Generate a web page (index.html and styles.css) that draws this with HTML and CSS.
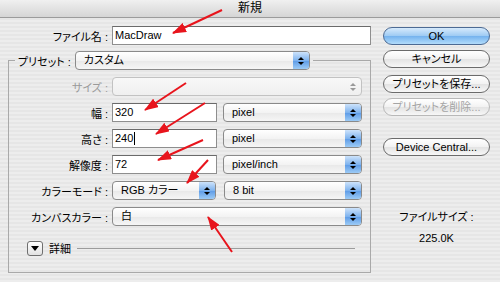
FILE: index.html
```html
<!DOCTYPE html>
<html lang="ja">
<head>
    <meta charset="UTF-8">
    <title>新規</title>
    <link rel="stylesheet" href="styles.css">
</head>
<body>
    <div class="titlebar">新規</div>
    <div class="dialog">
        <div class="main">
            <div class="row name-row">
                <span class="label">ファイル名 :</span>
                <div class="field grow">MacDraw</div>
            </div>
            <fieldset class="group">
                <legend class="preset">
                    <span class="preset-label">プリセット :</span>
                    <div class="popup preset-popup"><span class="value">カスタム</span><span class="arrows"></span></div>
                </legend>
                <div class="row">
                    <span class="label disabled">サイズ :</span>
                    <div class="popup grow off"><span class="value"></span><span class="arrows"></span></div>
                </div>
                <div class="row">
                    <span class="label">幅 :</span>
                    <div class="field num">320</div>
                    <div class="popup unit"><span class="value">pixel</span><span class="arrows"></span></div>
                </div>
                <div class="row">
                    <span class="label">高さ :</span>
                    <div class="field num">240<span class="caret"></span></div>
                    <div class="popup unit"><span class="value">pixel</span><span class="arrows"></span></div>
                </div>
                <div class="row">
                    <span class="label">解像度 :</span>
                    <div class="field num">72</div>
                    <div class="popup unit"><span class="value">pixel/inch</span><span class="arrows"></span></div>
                </div>
                <div class="row">
                    <span class="label">カラーモード :</span>
                    <div class="popup mode"><span class="value">RGB カラー</span><span class="arrows"></span></div>
                    <div class="popup bits"><span class="value">8 bit</span><span class="arrows"></span></div>
                </div>
                <div class="row">
                    <span class="label">カンバスカラー :</span>
                    <div class="popup grow"><span class="value">白</span><span class="arrows"></span></div>
                </div>
                <div class="details">
                    <span class="disclosure"></span>
                    <span class="details-label">詳細</span>
                    <span class="rule"></span>
                </div>
            </fieldset>
        </div>
        <div class="side">
            <div class="btn default ok">OK</div>
            <div class="btn cancel">キャンセル</div>
            <div class="btn save">プリセットを保存...</div>
            <div class="btn delete off">プリセットを削除...</div>
            <div class="btn device">Device Central...</div>
            <div class="info">
                <span>ファイルサイズ :</span>
                <span>225.0K</span>
            </div>
        </div>
    </div>

    <!-- red annotation arrows drawn over the dialog -->
    <svg class="notes" width="500" height="282" viewBox="0 0 500 282">
        <defs>
            <marker id="head" markerWidth="14" markerHeight="10" refX="13" refY="5" orient="auto" markerUnits="userSpaceOnUse">
                <path d="M0,0 L14,5 L0,10 Z" fill="#e8141c"/>
            </marker>
        </defs>
        <g stroke="#e8141c" stroke-width="2" marker-end="url(#head)">
            <line x1="222" y1="10" x2="173" y2="33"/>
            <line x1="186" y1="83" x2="145" y2="110"/>
            <line x1="205" y1="103" x2="156" y2="134"/>
            <line x1="203" y1="140" x2="158" y2="160"/>
            <line x1="208" y1="160" x2="187" y2="183"/>
            <line x1="232" y1="252" x2="208" y2="217"/>
        </g>
    </svg>
</body>
</html>
```

FILE: styles.css
```css
* {
    box-sizing: border-box;
}
body {
    margin: 0;
    width: 500px;
    height: 282px;
    overflow: hidden;
    position: relative;
    font-family: "Liberation Sans", "Noto Sans CJK JP", sans-serif;
    font-size: 11px;
    font-feature-settings: "palt";
    color: #000;
    background: repeating-linear-gradient(to bottom, #ededed 0, #ededed 2px, #e6e6e6 2px, #e6e6e6 4px);
}
.titlebar {
    height: 18px;
    line-height: 17px;
    text-align: center;
    font-size: 12px;
    background: linear-gradient(#f0f0f0, #d5d5d5);
    border-bottom: 1px solid #9b9b9b;
}
.dialog {
    display: flex;
    padding: 8px 0 0 8px;
}
.main {
    width: 363px;
}
.row {
    display: flex;
    align-items: center;
    height: 19px;
}
.label {
    width: 97px;
    padding-right: 4px;
    text-align: right;
    white-space: nowrap;
}
.name-row .label {
    width: 104px;
}
.disabled {
    color: #9a9a9a;
}
.grow {
    flex: 1;
}
.field {
    height: 19px;
    line-height: 17px;
    padding-left: 2px;
    background: #fff;
    border: 1px solid #8e8e8e;
    border-top-color: #6a6a6a;
    display: flex;
    align-items: center;
}
.num {
    width: 105px;
    margin-right: 6px;
}
.caret {
    width: 1px;
    height: 13px;
    margin-left: 1px;
    background: #000;
}

/* aqua popup menus */
.popup {
    display: flex;
    height: 19px;
    border: 1px solid #8a8a8a;
    border-radius: 4px;
    background: linear-gradient(#ffffff, #f3f3f3 50%, #e8e8e8 51%, #f6f6f6);
}
.popup .value {
    flex: 1;
    padding-left: 8px;
    line-height: 17px;
    white-space: nowrap;
}
.arrows {
    width: 16px;
    border-radius: 0 3px 3px 0;
    background: linear-gradient(#cde3fb, #7fb3ee 50%, #5c9ae6 51%, #9ccbf6);
    display: flex;
    flex-direction: column;
    align-items: center;
    justify-content: center;
    gap: 2px;
}
.arrows::before,
.arrows::after {
    content: "";
    border-left: 3px solid transparent;
    border-right: 3px solid transparent;
}
.arrows::before {
    border-bottom: 3px solid #000;
}
.arrows::after {
    border-top: 3px solid #000;
}
.popup.off {
    border-color: #c2c2c2;
    background: linear-gradient(#f8f8f8, #efefef);
}
.popup.off .arrows {
    background: none;
}
.popup.off .arrows::before {
    border-bottom-color: #9a9a9a;
}
.popup.off .arrows::after {
    border-top-color: #9a9a9a;
}
.unit {
    width: 139px;
}
.mode {
    width: 104px;
    margin-right: 8px;
}
.bits {
    width: 138px;
}

/* group box with the preset popup in its legend */
.group {
    margin: 6px 0 0;
    padding: 7px 8px 16px 6px;
    border: 1px solid #a9a9a9;
    display: flex;
    flex-direction: column;
    gap: 7px;
}
.preset {
    display: flex;
    align-items: center;
    padding: 0 3px;
}
.preset-label {
    white-space: nowrap;
}
.preset-popup {
    width: 235px;
    margin-left: 4px;
}
.details {
    display: flex;
    align-items: center;
    margin-top: 7px;
    padding-left: 12px;
}
.disclosure {
    width: 16px;
    height: 15px;
    border: 1px solid #6f6f6f;
    border-radius: 3px;
    background: linear-gradient(#ffffff, #e2e2e2);
    display: flex;
    align-items: center;
    justify-content: center;
}
.disclosure::after {
    content: "";
    border-left: 4px solid transparent;
    border-right: 4px solid transparent;
    border-top: 5px solid #000;
}
.details-label {
    margin-left: 6px;
}
.rule {
    flex: 1;
    height: 1px;
    margin-left: 6px;
    margin-right: 7px;
    background: #9c9c9c;
}

/* right hand buttons */
.side {
    width: 107px;
    margin-left: 12px;
    display: flex;
    flex-direction: column;
}
.btn {
    height: 18px;
    line-height: 16px;
    text-align: center;
    border: 1px solid #6b6b6b;
    border-radius: 9px;
    background: linear-gradient(#ffffff, #f2f2f2 50%, #e3e3e3 51%, #f7f7f7);
    white-space: nowrap;
}
.btn.default {
    border-color: #4c6a93;
    background: linear-gradient(#d6eafc, #9dcaf3 50%, #74b2ee 51%, #b2dcfb);
}
.btn.off {
    color: #a5a5a5;
    border-color: #b8b8b8;
}
.ok {
    margin-top: 1px;
}
.cancel {
    margin-top: 5px;
}
.save {
    margin-top: 7px;
}
.delete {
    margin-top: 5px;
}
.device {
    margin-top: 22px;
}
.info {
    margin-top: 55px;
    display: flex;
    flex-direction: column;
    align-items: center;
    gap: 9px;
    line-height: 12px;
}

.notes {
    position: absolute;
    top: 0;
    left: 0;
    pointer-events: none;
}
```
